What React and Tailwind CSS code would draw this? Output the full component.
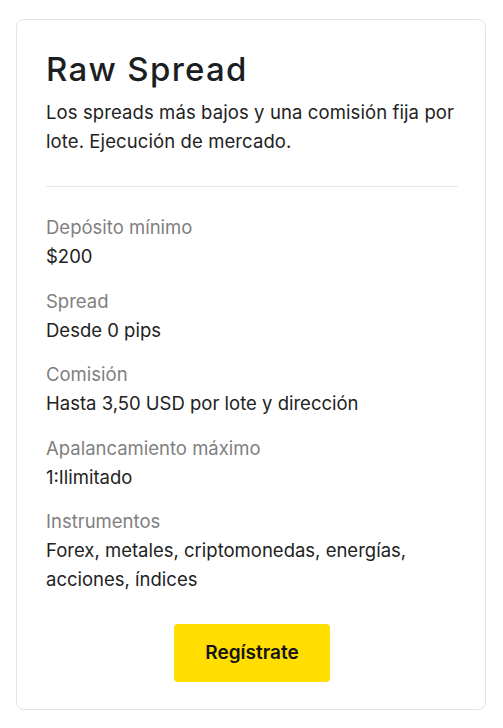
import React from 'react';

const specs = [
  { label: 'Depósito mínimo', value: '$200' },
  { label: 'Spread', value: 'Desde 0 pips' },
  { label: 'Comisión', value: 'Hasta 3,50 USD por lote y dirección' },
  { label: 'Apalancamiento máximo', value: '1:Ilimitado' },
  { label: 'Instrumentos', value: 'Forex, metales, criptomonedas, energías, acciones, índices' },
];

export default function App() {
  return (
    <div className="min-h-screen bg-white pt-[19px] px-4" style={{ fontFamily: 'Inter, "Noto Sans", sans-serif' }}>
      <div className="w-[470px] rounded-lg border border-[#e3e3e3] bg-white pl-[29px] pr-[27px] pt-[29px] pb-[27px]">
        <h2 className="text-[33px] leading-[40px] font-medium text-[#1b1e22] tracking-[1.3px]">Raw Spread</h2>
        <p className="mt-[9px] text-[18.5px] leading-[29px] text-[#222] tracking-[0.1px]">
          Los spreads más bajos y una comisión fija por lote. Ejecución de mercado.
        </p>
        <div className="mt-[30px] border-t border-[#e6e6e6]" />
        <div className="mt-[26px] flex flex-col gap-[15.5px]">
          {specs.map((s) => (
            <div key={s.label}>
              <div className="text-[18.5px] leading-[29px] text-[#808080]">{s.label}</div>
              <div className="text-[18.5px] leading-[29px] text-[#222]">{s.value}</div>
            </div>
          ))}
        </div>
        <div className="mt-[30px] flex justify-center">
          <button className="h-[58px] w-[156px] rounded bg-[#ffde00] text-[19px] font-semibold text-[#141414]">
            Regístrate
          </button>
        </div>
      </div>
    </div>
  );
}
